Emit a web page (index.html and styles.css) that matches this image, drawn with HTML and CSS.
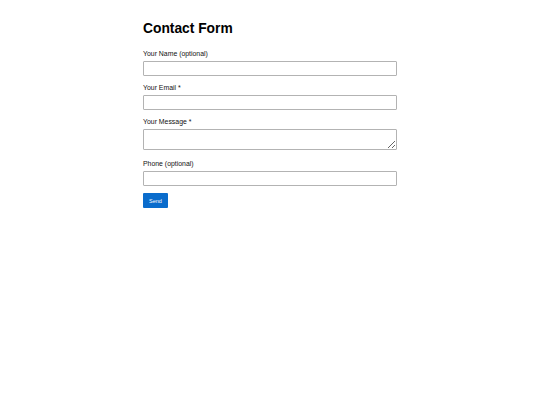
FILE: index.html
```html
<!DOCTYPE html>
<html lang="en">
<head>
    <meta charset="UTF-8">
    <meta name="viewport" content="width=device-width, initial-scale=1.0">
    <title>Contact Form</title>
    <link rel="stylesheet" href="styles.css">
</head>
<body>
    <div class="container">
        <h1>Contact Form</h1>
        <form>
            <div class="field">
                <label for="name">Your Name (optional)</label>
                <input type="text" id="name">
            </div>
            <div class="field">
                <label for="email">Your Email *</label>
                <input type="email" id="email">
            </div>
            <div class="field field-message">
                <label for="message">Your Message *</label>
                <textarea id="message"></textarea>
            </div>
            <div class="field">
                <label for="phone">Phone (optional)</label>
                <input type="tel" id="phone">
            </div>
            <button type="submit">Send</button>
        </form>
    </div>
</body>
</html>
```

FILE: styles.css
```css
body {
    margin: 0;
    background-color: #ffffff;
    font-family: "Liberation Sans", Arial, sans-serif;
    color: #000000;
}
.container {
    width: 254px;
    margin: 0 auto;
    padding-top: 20px;
}
h1 {
    font-size: 13.8px;
    line-height: 18px;
    margin: 0 0 11px 0;
}
.field {
    margin-bottom: 7px;
}
.field-message {
    margin-bottom: 9px;
}
label {
    display: block;
    font-size: 6.9px;
    line-height: 9px;
    margin-bottom: 3px;
    color: #111111;
}
input,
textarea {
    display: block;
    box-sizing: border-box;
    width: 100%;
    height: 15px;
    margin: 0;
    padding: 2px;
    border: 1px solid #b3b3b3;
    border-radius: 1px;
    font-family: inherit;
    font-size: 7px;
}
textarea {
    height: 21px;
    resize: vertical;
}
button {
    display: block;
    margin-top: 0;
    padding: 0 6px;
    height: 15px;
    font-family: inherit;
    font-size: 5.5px;
    color: #ffffff;
    background-color: #0a6ccc;
    border: none;
    border-radius: 1px;
    cursor: pointer;
}
```
